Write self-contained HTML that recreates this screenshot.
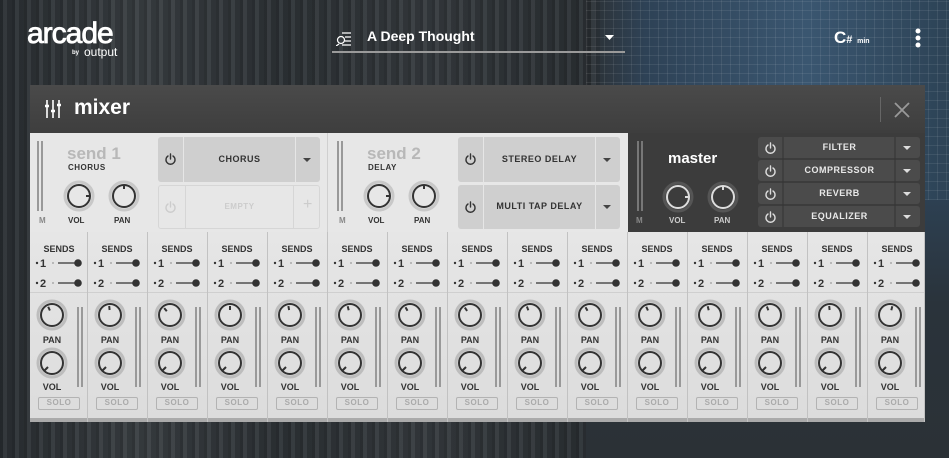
<!DOCTYPE html>
<html><head><meta charset="utf-8"><style>
*{margin:0;padding:0;box-sizing:border-box}
body{width:949px;height:458px;overflow:hidden;position:relative;font-family:"Liberation Sans",sans-serif;
background:linear-gradient(90deg,#2b3034 0%,#3a3f43 15%,#2e3337 30%,#363b3f 45%,#2c3135 62%,#2e4256 68%,#3a5670 85%,#2d4356 100%);}
.curt{position:absolute;left:0;top:0;width:600px;height:458px;background:repeating-linear-gradient(90deg,rgba(0,0,0,.18) 0 3px,rgba(255,255,255,.04) 3px 7px,rgba(0,0,0,.1) 7px 12px);}
.grid{position:absolute;left:586px;top:0;width:363px;height:200px;background:
repeating-linear-gradient(0deg,rgba(255,255,255,.08) 0 1px,transparent 1px 9px),repeating-linear-gradient(90deg,rgba(255,255,255,.08) 0 1px,transparent 1px 9px);}
.shade{position:absolute;left:586px;top:200px;width:363px;height:258px;background:linear-gradient(#2d4052,#2a333b 40%,#2b3136)}
.abs{position:absolute}
.panel{position:absolute;left:30px;top:85px;width:895px;height:337px;background:#3c3c3c}
.hdr{position:absolute;left:30px;top:85px;width:895px;height:48px;background:linear-gradient(#4a4a4a,#3e3e3e)}
.light{position:absolute;left:30px;top:133px;width:598px;height:99px;background:#e7e7e7}
.t{position:absolute;font-weight:bold;white-space:nowrap}
.slot{position:absolute;background:#cfcfcf;border-radius:3px}
.fx{position:absolute;left:758px;width:162px;height:21px;background:#4b4b4b;border-radius:3px}
.fx span{position:absolute;left:26px;width:111px;top:5px;text-align:center;color:#e8e8e8;font-size:9px;font-weight:bold;letter-spacing:.5px}
.col{position:absolute;top:232px;height:190px;width:60px;overflow:hidden;background:linear-gradient(#e6e6e6,#dcdcdc);border-right:1px solid #c2c2c2}
.col .lb{position:absolute;font-size:9px;font-weight:bold;color:#333;width:44px;text-align:center;left:0}
.col .solo{position:absolute;left:8px;top:165px;width:42px;height:13px;border:1.5px solid #b3b3b3;border-radius:2px;font-size:8px;color:#aaa;text-align:center;line-height:10px;font-weight:bold;letter-spacing:.5px}
.col .bot{position:absolute;left:0;bottom:0;width:100%;height:4px;background:#aaa}
</style></head><body>
<div class="curt"></div><div class="grid"></div><div class="shade"></div>
<div class="t" style="left:27px;top:17px;font-size:30px;color:#fff;font-weight:normal;letter-spacing:-1px;-webkit-text-stroke:0.8px #fff">arcade</div>
<div class="t" style="left:72px;top:50px;font-size:6px;color:#fff">by</div>
<div class="t" style="left:84px;top:45px;font-size:12px;color:#fff;font-weight:normal">output</div>
<svg class="abs" style="left:336px;top:30px" width="22" height="16"><circle cx="5" cy="10" r="3.5" fill="none" stroke="#fff" stroke-width="1.3"/><path d="M3 14 L0 16 M6 3h9 M9 7h6 M9 11h6 M6 15h9" stroke="#fff" stroke-width="1.3"/></svg>
<div class="t" style="left:367px;top:28px;font-size:14px;color:#fff">A Deep Thought</div>
<svg class="abs" style="left:605px;top:35px" width="10" height="6"><path d="M0 0h9l-4.5 5z" fill="#fff"/></svg>
<div class="abs" style="left:332px;top:51px;width:293px;height:2px;background:#9a9a9a"></div>
<div class="t" style="left:834px;top:28px;font-size:17px;color:#fff">C<span style="font-size:11px">#</span> <span style="font-size:7px">min</span></div>
<svg class="abs" style="left:913px;top:28px" width="10" height="20"><circle cx="5" cy="3" r="2.5" fill="#fff"/><circle cx="5" cy="10" r="2.5" fill="#fff"/><circle cx="5" cy="17" r="2.5" fill="#fff"/></svg>

<div class="panel"></div><div class="hdr"></div>
<svg class="abs" style="left:44px;top:100px" width="18" height="18"><path d="M3 0v18M9 0v18M15 0v18" stroke="#fff" stroke-width="1.6"/><path d="M1 6h4M7 11h4M13 5h4" stroke="#fff" stroke-width="2.5"/></svg>
<div class="t" style="left:74px;top:96px;font-size:21px;color:#fff">mixer</div>
<div class="abs" style="left:880px;top:97px;width:1px;height:25px;background:#666"></div>
<svg class="abs" style="left:894px;top:102px" width="16" height="16"><path d="M1 1L15 15M15 1L1 15" stroke="#999" stroke-width="1.8"/></svg>

<div class="light"></div>
<div class="abs" style="left:327px;top:133px;width:1px;height:99px;background:#cfcfcf"></div>
<svg class="abs" style="left:30px;top:133px" width="900" height="99">
<g stroke="#999" stroke-width="2"><path d="M8 8v70M12 8v70M308 8v70M312 8v70"/></g>
<g stroke="#777" stroke-width="2"><path d="M608 8v70M612 8v70"/></g>
<defs>
<g id="kd"><circle r="14" fill="none" stroke="#c8c8c8" stroke-width="3"/><circle r="11" fill="none" stroke="#333" stroke-width="2"/></g>
<g id="kw"><circle r="14" fill="none" stroke="#555" stroke-width="3"/><circle r="11" fill="none" stroke="#ddd" stroke-width="2"/></g>
</defs>
<use href="#kd" x="49" y="63"/><path d="M49 63m7 0h4" stroke="#333" stroke-width="2"/>
<use href="#kd" x="94" y="63"/><path d="M94 52v4" stroke="#333" stroke-width="2"/>
<use href="#kd" x="349" y="63"/><path d="M349 63m7 0h4" stroke="#333" stroke-width="2"/>
<use href="#kd" x="394" y="63"/><path d="M394 52v4" stroke="#333" stroke-width="2"/>
<use href="#kw" x="648" y="64"/><path d="M655 64h4" stroke="#ddd" stroke-width="2"/>
<use href="#kw" x="693" y="64"/><path d="M693 53v4" stroke="#ddd" stroke-width="2"/>
</svg>
<div class="t" style="left:39px;top:216px;font-size:8px;color:#888">M</div>
<div class="t" style="left:339px;top:216px;font-size:8px;color:#888">M</div>
<div class="t" style="left:636px;top:216px;font-size:8px;color:#888">M</div>
<div class="t" style="left:67px;top:144px;font-size:17px;color:#b8b8b8">send 1</div>
<div class="t" style="left:68px;top:163px;font-size:8px;color:#333;letter-spacing:.5px">CHORUS</div>
<div class="t" style="left:367px;top:144px;font-size:17px;color:#b8b8b8">send 2</div>
<div class="t" style="left:368px;top:163px;font-size:8px;color:#333;letter-spacing:.5px">DELAY</div>
<div class="t" style="left:68px;top:216px;font-size:8px;color:#333">VOL</div>
<div class="t" style="left:114px;top:216px;font-size:8px;color:#333">PAN</div>
<div class="t" style="left:368px;top:216px;font-size:8px;color:#333">VOL</div>
<div class="t" style="left:414px;top:216px;font-size:8px;color:#333">PAN</div>
<div class="t" style="left:668px;top:150px;font-size:15px;color:#fff">master</div>
<div class="t" style="left:669px;top:216px;font-size:8px;color:#ccc">VOL</div>
<div class="t" style="left:714px;top:216px;font-size:8px;color:#ccc">PAN</div>

<div class="slot" style="left:158px;top:137px;width:162px;height:45px"></div>
<div class="abs" style="left:183px;top:137px;width:1px;height:45px;background:#e6e6e6"></div>
<div class="abs" style="left:295px;top:137px;width:1px;height:45px;background:#e6e6e6"></div>
<div class="t" style="left:184px;top:154px;width:111px;text-align:center;font-size:9px;color:#333;letter-spacing:.5px">CHORUS</div>
<div class="abs" style="left:158px;top:185px;width:162px;height:44px;border:1px solid #d6d6d6;border-radius:3px"></div>
<div class="abs" style="left:185px;top:185px;width:109px;height:44px;border:1px solid #d6d6d6"></div>
<div class="t" style="left:184px;top:202px;width:111px;text-align:center;font-size:8px;color:#ccc;letter-spacing:.5px">EMPTY</div>
<div class="t" style="left:303px;top:196px;font-size:16px;color:#ccc;font-weight:normal">+</div>
<div class="slot" style="left:458px;top:137px;width:162px;height:45px"></div>
<div class="slot" style="left:458px;top:185px;width:162px;height:44px"></div>
<div class="abs" style="left:483px;top:137px;width:1px;height:92px;background:#e6e6e6"></div>
<div class="abs" style="left:595px;top:137px;width:1px;height:92px;background:#e6e6e6"></div>
<div class="t" style="left:484px;top:154px;width:111px;text-align:center;font-size:9px;color:#333;letter-spacing:.5px">STEREO DELAY</div>
<div class="t" style="left:484px;top:201px;width:111px;text-align:center;font-size:9px;color:#333;letter-spacing:.5px">MULTI TAP DELAY</div>
<svg class="abs" style="left:158px;top:137px" width="470" height="95">
<g fill="none" stroke-width="1.4" stroke-linecap="round">
<g stroke="#333"><path d="M10 19a4.5 4.5 0 1 0 5 0M12.5 17v5"/><path d="M310 19a4.5 4.5 0 1 0 5 0M312.5 17v5"/><path d="M310 67a4.5 4.5 0 1 0 5 0M312.5 65v5"/></g>
<g stroke="#ccc"><path d="M10 67a4.5 4.5 0 1 0 5 0M12.5 65v5"/></g></g>
<path d="M145 21h8l-4 4z M445 21h8l-4 4z M445 68h8l-4 4z" fill="#444"/>
</svg>
<div class="fx" style="top:137px"><span>FILTER</span></div>
<div class="fx" style="top:160px"><span>COMPRESSOR</span></div>
<div class="fx" style="top:183px"><span>REVERB</span></div>
<div class="fx" style="top:206px"><span>EQUALIZER</span></div>
<svg class="abs" style="left:758px;top:137px" width="162" height="90">
<g stroke="#333" stroke-width="1"><path d="M25 0v90M137 0v90"/></g>
<g fill="none" stroke="#ddd" stroke-width="1.4" stroke-linecap="round">
<path d="M10 8a4.5 4.5 0 1 0 5 0M12.5 6v5"/><path d="M10 31a4.5 4.5 0 1 0 5 0M12.5 29v5"/><path d="M10 54a4.5 4.5 0 1 0 5 0M12.5 52v5"/><path d="M10 77a4.5 4.5 0 1 0 5 0M12.5 75v5"/></g>
<path d="M145 9h8l-4 4zM145 32h8l-4 4zM145 55h8l-4 4zM145 78h8l-4 4z" fill="#ddd"/>
</svg>

<div id="cols"></div>
<script>
var h='',lefts=[30];for(var i=0;i<14;i++)lefts.push(88+60*i);
var panAng=[-25,-5,-40,0,-10,-15,-30,-35,-20,-30,-25,-15,-20,-5,15];
for(var i=0;i<15;i++){var L=lefts[i],w=i==0?58:(i==14?57:60);
var a=panAng[i]*Math.PI/180,px=22+9*Math.sin(a),py=83-9*Math.cos(a),px2=22+5*Math.sin(a),py2=83-5*Math.cos(a);
h+='<div class="col" style="left:'+L+'px;width:'+w+'px">'+
'<div class="lb" style="left:7px;top:12px">SENDS</div>'+
'<svg class="abs" style="left:0;top:0" width="60" height="190">'+
'<rect x="0" y="60" width="60" height="1" fill="#cfcfcf"/>'+
'<g fill="#333"><circle cx="7" cy="31" r="1.2"/><circle cx="7" cy="51" r="1.2"/><circle cx="48" cy="31" r="3.8"/><circle cx="48" cy="51" r="3.8"/></g>'+
'<g fill="#aaa"><circle cx="23" cy="31" r="1"/><circle cx="23" cy="51" r="1"/></g>'+
'<path d="M28 31h17M28 51h17" stroke="#333" stroke-width="1.3"/>'+
'<text x="10" y="35" font-size="11" font-weight="bold" fill="#333" font-family="Liberation Sans">1</text>'+
'<text x="10" y="55" font-size="11" font-weight="bold" fill="#333" font-family="Liberation Sans">2</text>'+
'<circle cx="22" cy="83" r="14" fill="none" stroke="#bdbdbd" stroke-width="3"/><circle cx="22" cy="83" r="11" fill="none" stroke="#333" stroke-width="2"/>'+
'<path d="M'+px2.toFixed(1)+' '+py2.toFixed(1)+'L'+px.toFixed(1)+' '+py.toFixed(1)+'" stroke="#333" stroke-width="2"/>'+
'<circle cx="22" cy="131" r="14" fill="none" stroke="#bdbdbd" stroke-width="3"/><circle cx="22" cy="131" r="11" fill="none" stroke="#333" stroke-width="2"/>'+
'<path d="M18 135L14 139" stroke="#333" stroke-width="2"/>'+
'<path d="M48 75v80M52 75v80" stroke="#999" stroke-width="2"/></svg>'+
'<div class="lb" style="top:103px">PAN</div><div class="lb" style="top:150px">VOL</div>'+
'<div class="solo">SOLO</div><div class="bot"></div></div>';}
document.getElementById('cols').innerHTML=h;
</script>
</body></html>
